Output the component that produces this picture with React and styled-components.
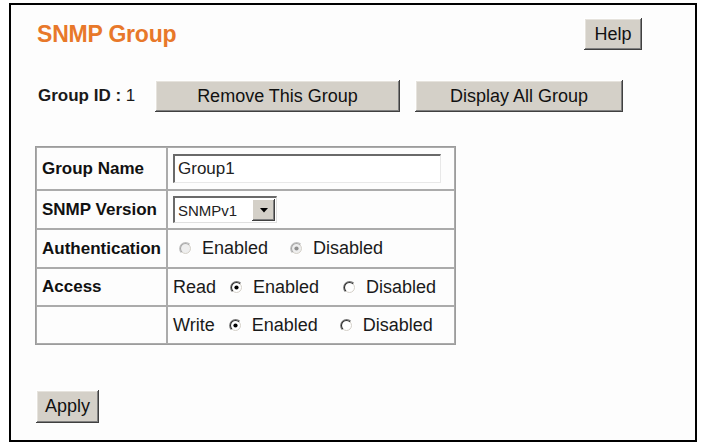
import React from "react";
import styled, { createGlobalStyle } from "styled-components";

const Global = createGlobalStyle`
  html, body { margin: 0; padding: 0; background: #ffffff; }
  body { font-family: "Liberation Sans", Arial, sans-serif; color: #1a1a1a; }
  * { box-sizing: border-box; }
`;

const Frame = styled.div`
  margin: 3px 0 0 9px;
  width: 688px;
  height: 439px;
  border: 2px solid #000;
  background: #fdfdfd;
  padding: 13px 53px 17px 0;
  display: flex;
  flex-direction: column;
`;

const Header = styled.div`
  display: flex;
  align-items: center;
  justify-content: space-between;
  padding-left: 26px;
  height: 32px;
`;

const Title = styled.h1`
  margin: 0;
  font-size: 23px;
  font-weight: bold;
  color: #e8782a;
  letter-spacing: -0.2px;
`;

const Button = styled.button`
  font-family: "Liberation Sans", Arial, sans-serif;
  font-size: 18px;
  color: #111;
  background: #d4d0c8;
  border: none;
  padding: 0;
  height: ${(p) => p.$h || 32}px;
  width: ${(p) => p.$w}px;
  box-shadow: inset -1px -1px #404040, inset 1px 1px #ffffff,
    inset -2px -2px #808080, inset 2px 2px #e6e3dd;
  display: flex;
  align-items: center;
  justify-content: center;
  cursor: default;
`;

const ActionRow = styled.div`
  margin-top: 30px;
  display: flex;
  align-items: center;
  padding-left: 27px;
  height: 32px;
`;

const IdLabel = styled.div`
  width: 117px;
  font-size: 17px;
  b { font-weight: bold; }
`;

const ButtonGroup = styled.div`
  display: flex;
  gap: 15px;
`;

const Table = styled.table`
  margin: 34px 0 0 24px;
  width: 421px;
  table-layout: fixed;
  border-collapse: separate;
  border-spacing: 0;
  border: 1px solid #9c9c9c;
`;

const Row = styled.tr`
  height: ${(p) => p.$h}px;
`;

const LabelCell = styled.td`
  width: 131px;
  border: 1px solid #ababab;
  font-size: 17px;
  font-weight: bold;
  color: #111;
  padding: 0 0 0 5px;
  vertical-align: middle;
  white-space: nowrap;
`;

const ValueCell = styled.td`
  border: 1px solid #ababab;
  padding: 0 0 0 5px;
  vertical-align: middle;
  font-size: 18px;
  color: #1a1a1a;
`;

const TextInput = styled.div`
  width: 268px;
  height: 29px;
  border-style: solid;
  border-width: 2px 1px 1px 2px;
  border-color: #6a6a6a #e8e8e8 #e8e8e8 #6a6a6a;
  background: #fff;
  font-size: 17px;
  display: flex;
  align-items: center;
  padding-left: 3px;
  color: #222;
`;

const Select = styled.div`
  width: 104px;
  height: 27px;
  border-style: solid;
  border-width: 2px 1px 1px 2px;
  border-color: #6a6a6a #e0e0e0 #e0e0e0 #6a6a6a;
  background: #fff;
  display: flex;
  align-items: center;
  justify-content: space-between;
  font-size: 15px;
  color: #222;
  padding-left: 3px;
`;

const SelectArrow = styled.div`
  width: 23px;
  height: 22px;
  margin-right: 1px;
  background: #d4d0c8;
  box-shadow: inset -1px -1px #404040, inset 1px 1px #ffffff,
    inset -2px -2px #808080;
  display: flex;
  align-items: center;
  justify-content: center;
`;

const Options = styled.div`
  display: flex;
  align-items: center;
  padding-left: ${(p) => p.$indent || 0}px;
  gap: ${(p) => p.$gap}px;
`;

const Lead = styled.div`
  display: flex;
  align-items: center;
  gap: 14px;
`;

const Option = styled.label`
  display: flex;
  align-items: center;
  gap: 10px;
`;

function Radio({ checked, disabled }) {
  const outerTL = disabled ? "#c0c0c0" : "#7a7a7a";
  const innerTL = disabled ? "#a8a8a8" : "#303030";
  const fill = disabled ? "#eeeeee" : "#ffffff";
  const dot = disabled ? "#909090" : "#000000";
  return (
    <svg width="13" height="13" viewBox="0 0 13 13">
      <circle cx="6.5" cy="6.5" r="5" fill={fill} />
      <path d="M2.26 10.74 A6 6 0 0 1 10.74 2.26" fill="none" stroke={outerTL} strokeWidth="1.1" />
      <path d="M10.74 2.26 A6 6 0 0 1 2.26 10.74" fill="none" stroke="#ffffff" strokeWidth="1" />
      <path d="M2.96 10.04 A5 5 0 0 1 10.04 2.96" fill="none" stroke={innerTL} strokeWidth="1.1" />
      <path d="M10.04 2.96 A5 5 0 0 1 2.96 10.04" fill="none" stroke="#d4d0c8" strokeWidth="1" />
      {checked && <circle cx="6.5" cy="6.5" r="2.1" fill={dot} />}
    </svg>
  );
}

function RadioOption({ label, checked, disabled }) {
  return (
    <Option>
      <Radio checked={checked} disabled={disabled} />
      <span>{label}</span>
    </Option>
  );
}

const ApplyWrap = styled.div`
  margin: 45px 0 0 25px;
`;

export default function App() {
  return (
    <>
      <Global />
      <Frame>
        <Header>
          <Title>SNMP Group</Title>
          <Button $w={58}>Help</Button>
        </Header>
        <ActionRow>
          <IdLabel>
            <b>Group ID :</b> 1
          </IdLabel>
          <ButtonGroup>
            <Button $w={245}>Remove This Group</Button>
            <Button $w={208}>Display All Group</Button>
          </ButtonGroup>
        </ActionRow>
        <Table>
          <tbody>
            <Row $h={43}>
              <LabelCell>Group Name</LabelCell>
              <ValueCell>
                <TextInput>Group1</TextInput>
              </ValueCell>
            </Row>
            <Row $h={39}>
              <LabelCell>SNMP Version</LabelCell>
              <ValueCell>
                <Select>
                  <span>SNMPv1</span>
                  <SelectArrow>
                    <svg width="8" height="5" viewBox="0 0 8 5">
                      <path d="M0 0 H8 L4 4.5 Z" fill="#000" />
                    </svg>
                  </SelectArrow>
                </Select>
              </ValueCell>
            </Row>
            <Row $h={39}>
              <LabelCell>Authentication</LabelCell>
              <ValueCell>
                <Options $indent={6} $gap={22}>
                  <RadioOption label="Enabled" disabled />
                  <RadioOption label="Disabled" checked disabled />
                </Options>
              </ValueCell>
            </Row>
            <Row $h={38}>
              <LabelCell>Access</LabelCell>
              <ValueCell>
                <Options $gap={24}>
                  <Lead>
                    <span>Read</span>
                    <RadioOption label="Enabled" checked />
                  </Lead>
                  <RadioOption label="Disabled" />
                </Options>
              </ValueCell>
            </Row>
            <Row $h={38}>
              <LabelCell />
              <ValueCell>
                <Options $gap={22}>
                  <Lead>
                    <span>Write</span>
                    <RadioOption label="Enabled" checked />
                  </Lead>
                  <RadioOption label="Disabled" />
                </Options>
              </ValueCell>
            </Row>
          </tbody>
        </Table>
        <ApplyWrap>
          <Button $w={63} $h={33}>Apply</Button>
        </ApplyWrap>
      </Frame>
    </>
  );
}
